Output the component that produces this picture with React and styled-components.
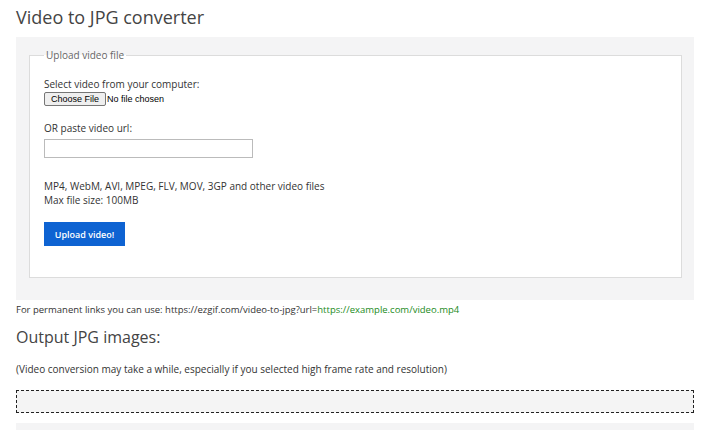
import React from "react";
import styled, { createGlobalStyle } from "styled-components";

const GlobalStyle = createGlobalStyle`
  html, body {
    margin: 0;
    padding: 0;
    background: #fff;
  }
  body {
    font-family: "Open Sans", "Liberation Sans", sans-serif;
    color: #333;
  }
`;

const Page = styled.div`
  width: 678px;
  padding: 0 26px 0 16px;
`;

const Title = styled.h1`
  margin: 0;
  padding-top: 2px;
  font-size: 18px;
  line-height: 30px;
  font-weight: 400;
  color: #444;
`;

const Panel = styled.div`
  margin-top: 5px;
  background: #f4f4f5;
  padding: 11px 12px 22px 13px;
`;

const Fieldset = styled.fieldset`
  margin: 0;
  padding: 6px 14px 31px 14px;
  border: 1px solid #dcdcdc;
  background: #fff;
`;

const Legend = styled.legend`
  margin-left: 0;
  padding: 0 2px;
  font-size: 10px;
  color: #666;
`;

const Label = styled.div`
  font-size: 10px;
  line-height: 14px;
  margin-top: ${(p) => p.$top || 0}px;
`;

const FileInput = styled.input`
  display: block;
  margin: 1px 0 0;
  font: 9px "Liberation Sans", Arial, sans-serif;
  color: #000;
  &::file-selector-button {
    font: 9px "Liberation Sans", Arial, sans-serif;
    background: #efefef;
    border: 1px solid #767676;
    border-radius: 2px;
    padding: 0 6px;
    height: 14px;
    margin-right: 1px;
  }
`;

const UrlInput = styled.input`
  display: block;
  box-sizing: border-box;
  margin-top: 4px;
  width: 209px;
  height: 19px;
  border: 1px solid #bbb;
  padding: 0 3px;
  font-size: 11px;
`;

const UploadButton = styled.button`
  display: block;
  margin-top: 15px;
  width: 81px;
  height: 24px;
  border: none;
  background: #0e63d2;
  color: #fff;
  font-family: "Open Sans", sans-serif;
  font-size: 9px;
  font-weight: 600;
  padding: 0;
`;

const LinkNote = styled.p`
  margin: 3px 0 0;
  font-size: 9.5px;
  line-height: 14px;
  color: #333;
  span {
    color: #228b22;
  }
`;

const SubTitle = styled.h2`
  margin: 7px 0 0;
  font-size: 16px;
  line-height: 26px;
  font-weight: 400;
  color: #444;
`;

const Note = styled.p`
  margin: 12px 0 0;
  font-size: 10px;
  line-height: 14px;
`;

const OutputBox = styled.div`
  margin-top: 14px;
  height: 21px;
  border: 1px dashed #222;
  background: #f4f4f4;
`;

const Footer = styled.div`
  margin-top: 10px;
  height: 20px;
  background: #f4f4f5;
`;

export default function App() {
  return (
    <>
      <GlobalStyle />
      <Page>
        <Title>Video to JPG converter</Title>
        <Panel>
          <Fieldset>
            <Legend>Upload video file</Legend>
            <Label $top={9}>Select video from your computer:</Label>
            <FileInput type="file" />
            <Label $top={15}>OR paste video url:</Label>
            <UrlInput type="text" />
            <Label $top={21}>MP4, WebM, AVI, MPEG, FLV, MOV, 3GP and other video files</Label>
            <Label>Max file size: 100MB</Label>
            <UploadButton>Upload video!</UploadButton>
          </Fieldset>
        </Panel>
        <LinkNote>
          For permanent links you can use: https://ezgif.com/video-to-jpg?url=
          <span>https://example.com/video.mp4</span>
        </LinkNote>
        <SubTitle>Output JPG images:</SubTitle>
        <Note>(Video conversion may take a while, especially if you selected high frame rate and resolution)</Note>
        <OutputBox />
        <Footer />
      </Page>
    </>
  );
}
